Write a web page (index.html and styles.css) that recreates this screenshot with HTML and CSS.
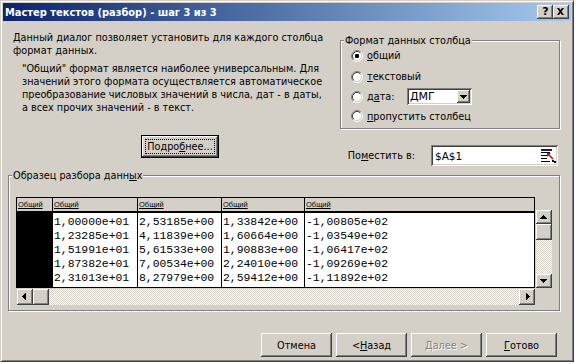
FILE: index.html
```html
<!DOCTYPE html>
<html lang="ru">
<head>
<meta charset="utf-8">
<title>Мастер текстов</title>
<link rel="stylesheet" href="styles.css">
</head>
<body>
<div class="dlg">
  <div class="title">
    <span class="ttext">Мастер текстов (разбор) - шаг 3 из 3</span>
    <div class="tbtns">
      <div class="tbtn q">?</div>
      <div class="tbtn"><svg width="16" height="14" viewBox="0 0 16 14"><path d="M4 3h2l1.5 2 1.5-2h2l-2.5 3.5L11 10H9L7.5 8 6 10H4l2.5-3.5z" fill="#000"/></svg></div>
    </div>
  </div>
  <div class="body">
    <div class="top">
      <div class="left">
        <p class="p1">Данный диалог позволяет установить для каждого столбца<br>формат данных.</p>
        <p class="p2">"Общий" формат является наиболее универсальным. Для<br>значений этого формата осуществляется автоматическое<br>преобразование числовых значений в числа, дат - в даты,<br>а всех прочих значений - в текст.</p>
        <div class="btn def more"><span class="focus">Подро<u>б</u>нее...</span></div>
      </div>
      <div class="right">
        <div class="group fmt">
          <span class="legend">Формат данных столбца</span>
          <div class="radio r1"><svg class="rb" width="12" height="12" viewBox="0 0 12 12"><circle cx="6" cy="6" r="4.5" fill="#fff"/><path d="M2.11 9.89A5.5 5.5 0 0 1 9.89 2.11" stroke="#808080" fill="none"/><path d="M9.89 2.11A5.5 5.5 0 0 1 2.11 9.89" stroke="#fff" fill="none"/><path d="M2.82 9.18A4.5 4.5 0 0 1 9.18 2.82" stroke="#404040" fill="none"/><path d="M9.18 2.82A4.5 4.5 0 0 1 2.82 9.18" stroke="#D4D0C8" fill="none"/><rect x="4" y="4" width="4" height="4" rx="1" fill="#000"/></svg><span class="rl"><u>о</u>бщий</span></div>
          <div class="radio r2"><svg class="rb" width="12" height="12" viewBox="0 0 12 12"><circle cx="6" cy="6" r="4.5" fill="#fff"/><path d="M2.11 9.89A5.5 5.5 0 0 1 9.89 2.11" stroke="#808080" fill="none"/><path d="M9.89 2.11A5.5 5.5 0 0 1 2.11 9.89" stroke="#fff" fill="none"/><path d="M2.82 9.18A4.5 4.5 0 0 1 9.18 2.82" stroke="#404040" fill="none"/><path d="M9.18 2.82A4.5 4.5 0 0 1 2.82 9.18" stroke="#D4D0C8" fill="none"/></svg><span class="rl"><u>т</u>екстовый</span></div>
          <div class="radio r3"><svg class="rb" width="12" height="12" viewBox="0 0 12 12"><circle cx="6" cy="6" r="4.5" fill="#fff"/><path d="M2.11 9.89A5.5 5.5 0 0 1 9.89 2.11" stroke="#808080" fill="none"/><path d="M9.89 2.11A5.5 5.5 0 0 1 2.11 9.89" stroke="#fff" fill="none"/><path d="M2.82 9.18A4.5 4.5 0 0 1 9.18 2.82" stroke="#404040" fill="none"/><path d="M9.18 2.82A4.5 4.5 0 0 1 2.82 9.18" stroke="#D4D0C8" fill="none"/></svg><span class="rl date">д<u>а</u>та:</span>
            <div class="combo sunken"><span class="cval">ДМГ</span><div class="cbtn"><svg width="13" height="13" viewBox="0 0 13 13"><path d="M3 5h7v1h-1v1h-1v1h-1v1h-1v-1h-1v-1h-1v-1h-1z" fill="#000"/></svg></div></div>
          </div>
          <div class="radio r4"><svg class="rb" width="12" height="12" viewBox="0 0 12 12"><circle cx="6" cy="6" r="4.5" fill="#fff"/><path d="M2.11 9.89A5.5 5.5 0 0 1 9.89 2.11" stroke="#808080" fill="none"/><path d="M9.89 2.11A5.5 5.5 0 0 1 2.11 9.89" stroke="#fff" fill="none"/><path d="M2.82 9.18A4.5 4.5 0 0 1 9.18 2.82" stroke="#404040" fill="none"/><path d="M9.18 2.82A4.5 4.5 0 0 1 2.82 9.18" stroke="#D4D0C8" fill="none"/></svg><span class="rl"><u>п</u>ропустить столбец</span></div>
        </div>
        <div class="place">
          <span class="plabel">По<u>м</u>естить в:</span>
          <div class="field sunken"><span class="fval">$A$1</span>
            <svg class="pick" width="16" height="15" viewBox="0 0 16 15"><rect x="1" y="1" width="11" height="2" fill="#0A246A"/><rect x="1" y="4" width="9" height="1" fill="#000"/><rect x="1" y="7" width="6" height="1" fill="#000"/><rect x="1" y="10" width="6" height="1" fill="#000"/><rect x="1" y="13" width="9" height="1" fill="#000"/><path d="M7 5h4l-4 4z" fill="#E00000"/><path d="M8.5 6.5l4.5 4.5" stroke="#E00000" stroke-width="1.6"/><rect x="12" y="12" width="2" height="2" fill="#000"/><rect x="14" y="13" width="2" height="2" fill="#000"/></svg>
          </div>
        </div>
      </div>
    </div>
    <div class="group sample">
      <span class="legend">Образец разбора данн<u>ы</u>х</span>
      <div class="preview">
        <div class="grid">
          <div class="col c1"><div class="hd">Общий</div><div class="dt"></div></div>
          <div class="col c2"><div class="hd">Общий</div><div class="dt"><div>1,00000e+01</div><div>1,23285e+01</div><div>1,51991e+01</div><div>1,87382e+01</div><div>2,31013e+01</div></div></div>
          <div class="col c3"><div class="hd">Общий</div><div class="dt"><div>2,53185e+00</div><div>4,11839e+00</div><div>5,61533e+00</div><div>7,00534e+00</div><div>8,27979e+00</div></div></div>
          <div class="col c4"><div class="hd">Общий</div><div class="dt"><div>1,33842e+00</div><div>1,60664e+00</div><div>1,90883e+00</div><div>2,24010e+00</div><div>2,59412e+00</div></div></div>
          <div class="col c5"><div class="hd">Общий</div><div class="dt"><div>-1,00805e+02</div><div>-1,03549e+02</div><div>-1,06417e+02</div><div>-1,09269e+02</div><div>-1,11892e+02</div></div></div>
        </div>
        <div class="vscroll">
          <div class="sbtn vb"><svg width="16" height="14" viewBox="0 0 16 14"><path d="M7 5h1v1h1v1h1v1h1v1h-7v-1h1v-1h1v-1h1z" fill="#000"/></svg></div>
          <div class="thumb vt"></div>
          <div class="trough"></div>
          <div class="sbtn vb"><svg width="16" height="14" viewBox="0 0 16 14"><path d="M4 5h7v1h-1v1h-1v1h-1v1h-1v-1h-1v-1h-1v-1h-1z" fill="#000"/></svg></div>
        </div>
      </div>
      <div class="hscroll">
        <div class="sbtn hb"><svg width="16" height="16" viewBox="0 0 16 16"><path d="M5 7h1v-1h1v-1h1v-1h1v7h-1v-1h-1v-1h-1v-1h-1z" fill="#000"/></svg></div>
        <div class="thumb ht"></div>
        <div class="trough"></div>
        <div class="sbtn hb"><svg width="16" height="16" viewBox="0 0 16 16"><path d="M7 4h1v1h1v1h1v1h1v1h-1v1h-1v1h-1v1h-1z" fill="#000"/></svg></div>
      </div>
    </div>
    <div class="buttons">
      <div class="btn">Отмена</div>
      <div class="btn">&lt; <u>Н</u>азад</div>
      <div class="btn disabled"><u>Д</u>алее &gt;</div>
      <div class="btn"><u>Г</u>отово</div>
    </div>
  </div>
</div>
</body>
</html>
```

FILE: styles.css
```css
* { box-sizing: border-box; margin: 0; padding: 0; }
html, body { background: #fff; }
body {
  width: 576px; height: 364px; overflow: hidden;
  font-family: "DejaVu Sans", Verdana, sans-serif;
  font-size: 9.7px; color: #000;
}
u { text-decoration: underline; text-underline-offset: 1px; }

.dlg {
  width: 574px; height: 362px;
  background: #D4D0C8;
  border: 1px solid; border-color: #D4D0C8 #404040 #404040 #D4D0C8;
  box-shadow: inset 1px 1px #fff, inset -1px -1px #808080;
  padding: 2px;
  display: flex; flex-direction: column;
}

.title {
  height: 18px; flex: none;
  background: linear-gradient(to right, #0A246A, #A6CAF0);
  display: flex; align-items: center; justify-content: space-between;
  padding: 0 2px 0 2px;
  color: #fff; font-weight: bold; font-size: 9.9px;
}
.tbtns { display: flex; }
.tbtn {
  width: 16px; height: 14px;
  background: #D4D0C8;
  box-shadow: inset -1px -1px #404040, inset 1px 1px #fff, inset -2px -2px #808080;
  display: flex; align-items: center; justify-content: center;
  color: #000; font-size: 11px; font-weight: bold; line-height: 14px;
}
.tbtn.q { padding-left: 1px; }

.body { flex: 1; padding: 0 11px 0 5px; display: flex; flex-direction: column; }
.top { display: flex; flex: none; }
.left { width: 332px; }
.right { width: 220px; }
.p1, .p2 { line-height: 13px; white-space: nowrap; }
.p1 { margin: 10px 0 0 5px; }
.p2 { margin: 5px 0 0 14px; }

.btn {
  width: 71px; height: 24px;
  background: #D4D0C8;
  box-shadow: inset -1px -1px #404040, inset 1px 1px #fff, inset -2px -2px #808080;
  display: flex; align-items: center; justify-content: center;
  white-space: nowrap;
}
.btn.def {
  border: 1px solid #000;
  padding: 3px;
}
.more { width: 78px; height: 23px; margin: 21px 0 0 133px; }
.focus {
  flex: 1; align-self: stretch;
  border: 1px dotted #000;
  display: flex; align-items: center; justify-content: center;
}
.btn.disabled { color: #808080; text-shadow: 1px 1px #fff; }

.group {
  position: relative;
  border: 1px solid #808080;
  box-shadow: inset 1px 1px #fff, 1px 1px #fff;
}
.legend {
  position: absolute; top: -7px; left: 3px;
  background: #D4D0C8; padding: 0 1px; line-height: 13px; white-space: nowrap;
}
.fmt { margin-top: 19px; height: 89px; padding-top: 4px; }
.radio { display: flex; align-items: center; }
.r1 { height: 21px; }
.r2 { height: 21px; }
.r3 { height: 19px; }
.r4 { height: 20px; }
.rb { margin-left: 10px; flex: none; }
.rl { margin-left: 4px; white-space: nowrap; }
.rl.date { width: 40px; }

.sunken {
  background: #fff;
  box-shadow: inset 1px 1px #808080, inset -1px -1px #fff, inset 2px 2px #404040, inset -2px -2px #D4D0C8;
}
.combo {
  width: 65px; height: 17px;
  display: flex; align-items: stretch; padding: 2px;
}
.cval { flex: 1; line-height: 13px; padding-left: 1px; font-size: 11px; }
.cbtn {
  width: 13px; height: 13px;
  background: #D4D0C8;
  box-shadow: inset -1px -1px #404040, inset 1px 1px #fff, inset -2px -2px #808080;
}
.cbtn svg { display: block; }

.place {
  margin-top: 16px; height: 21px;
  display: flex; align-items: center; justify-content: flex-end;
  padding-right: 2px;
}
.plabel { margin-right: 16px; white-space: nowrap; }
.field {
  width: 127px; height: 21px;
  display: flex; align-items: center; padding: 2px;
}
.fval { flex: 1; padding-left: 2px; font-size: 10.5px; }
.pick { flex: none; }

.sample { margin-top: 9px; height: 136px; padding: 21px 0 0 7px; }
.preview { display: flex; gap: 1px; }
.grid {
  width: 519px; height: 91px;
  border: 1px solid #000; background: #fff;
  display: flex;
}
.col { display: flex; flex-direction: column; border-left: 1px solid #000; }
.c1 { border-left: 0; width: 35px; }
.c2 { width: 85px; }
.c3 { width: 84px; }
.c4 { width: 83px; }
.c5 { flex: 1; }
.hd {
  height: 15px; flex: none;
  background: #D4D0C8; border-bottom: 2px solid #000;
  font-family: "Liberation Sans", Arial, sans-serif;
  font-size: 7.5px; line-height: 13px; padding-left: 1px;
  text-decoration: underline; white-space: nowrap;
}
.dt {
  flex: 1; padding: 2px 0 0 1px;
  font-family: "Liberation Mono", "Courier New", monospace;
  font-size: 11.4px; line-height: 14px; white-space: nowrap;
}
.c1 .dt { background: #000; }

.vscroll {
  width: 16px; height: 78px; margin-top: 13px;
  display: flex; flex-direction: column;
}
.sbtn {
  background: #D4D0C8;
  box-shadow: inset -1px -1px #404040, inset 1px 1px #fff, inset -2px -2px #808080;
  flex: none;
}
.sbtn svg { display: block; }
.vb { width: 16px; height: 14px; }
.hb { width: 16px; height: 16px; }
.thumb {
  background: #D4D0C8;
  box-shadow: inset -1px -1px #404040, inset 1px 1px #fff, inset -2px -2px #808080;
  flex: none;
}
.vt { width: 16px; height: 16px; }
.ht { width: 16px; height: 16px; }
.trough {
  flex: 1;
  background-image: repeating-conic-gradient(#fff 0 25%, #D4D0C8 0 50%);
  background-size: 2px 2px;
}
.hscroll {
  margin: 1px 0 0 1px; width: 518px; height: 16px;
  display: flex;
}

.buttons {
  margin-top: 22px;
  display: flex; justify-content: flex-end; gap: 4px;
  padding-right: 3px;
}
```
